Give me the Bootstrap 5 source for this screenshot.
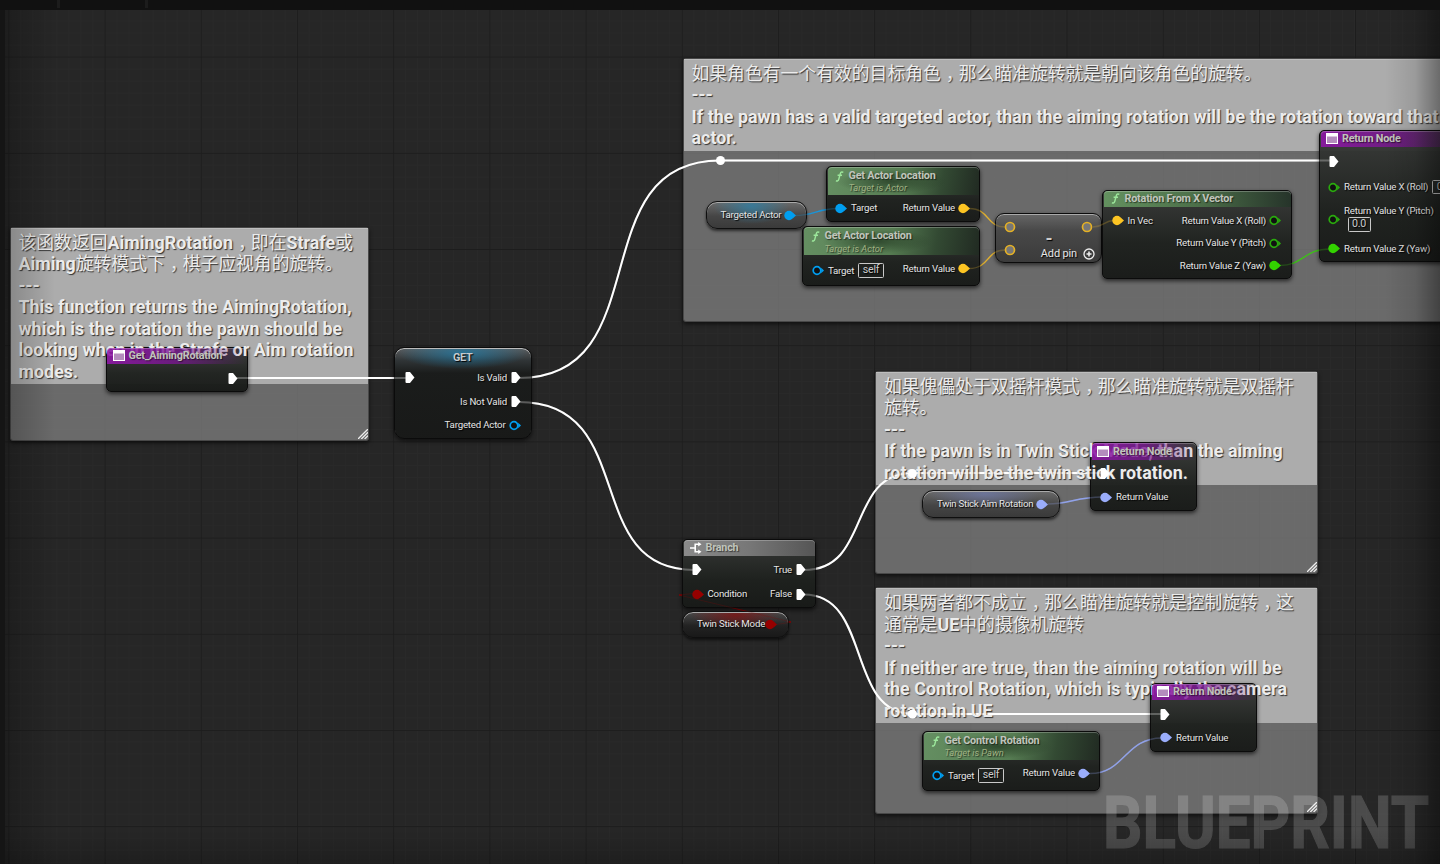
<!DOCTYPE html>
<html lang="zh-CN">
<head>
<meta charset="utf-8">
<meta name="viewport" content="width=device-width, initial-scale=1">
<title>AimingRotation – Blueprint</title>
<link href="https://cdn.jsdelivr.net/npm/bootstrap@5.3.0/dist/css/bootstrap.min.css" rel="stylesheet">
<style>
body{background:#262626;font-family:Roboto,"Noto Sans CJK SC",sans-serif;font-size:9.7px;line-height:1;color:#e6e6e6;overflow:hidden}
.graph{width:1440px;height:864px;white-space:nowrap;background-color:#262626;
 background-image:
 linear-gradient(90deg,#1d1d1d 1.3px,transparent 1.3px),
 linear-gradient(#1d1d1d 1.3px,transparent 1.3px),
 linear-gradient(90deg,#292929 1px,transparent 1px),
 linear-gradient(#292929 1px,transparent 1px);
 background-size:96.2px 96.2px,96.2px 96.2px,12.025px 12.025px,12.025px 12.025px;
 background-position:8.4px 56.6px,8.4px 56.6px,8.4px 56.6px,8.4px 56.6px}
.vignette{inset:0;z-index:8;pointer-events:none;
 background:linear-gradient(90deg,rgba(0,0,0,.25),transparent 55px,transparent 1385px,rgba(0,0,0,.1) 1415px,rgba(0,0,0,.38)),
 linear-gradient(transparent 830px,rgba(0,0,0,.2))}
.topstrip{left:0;top:0;width:1440px;height:10px;background:#111;z-index:9;padding-left:57px;gap:85px}
.topstrip i{width:3px;height:8px;background:#1c1c1c}
.leftstrip{left:0;top:0;width:5px;height:864px;background:#151515;z-index:9}
svg.wires{left:0;top:0;width:1440px;height:864px;fill:none;pointer-events:none}
svg.over{z-index:4;opacity:.25}
svg.knots{z-index:3}
/* comments */
.note{background:rgba(131,131,131,.73);border:1.5px solid #484848;border-radius:3px;box-shadow:0 2px 4px rgba(0,0,0,.6)}
.note .bar{background:#acacac;box-shadow:inset 0 1px 0 #bdbdbd}
.note .txt{position:relative;z-index:2;padding:4px 0 0 8px;font-size:17.8px;font-weight:700;line-height:21.6px;letter-spacing:.06px;color:#ececec;text-shadow:1px 1px 1px #333}
.note .zh{font-weight:400;letter-spacing:.03px}
.zh b{letter-spacing:.06px}
.cm{padding-left:5px;margin-right:-5px}
.grip{right:0;bottom:1px;width:10px;height:10px;fill:none;stroke:#eee;stroke-width:1.3}
/* nodes */
.bp{z-index:auto;transform:none;margin-left:-.5px}
.shell{inset:0;z-index:1;border-radius:5px;border:1px solid #0b0b0b;background:linear-gradient(rgba(56,58,56,.96),rgba(30,33,30,.97) 60%,rgba(24,26,24,.97));box-shadow:0 2px 4px rgba(0,0,0,.65)}
.hd{position:relative;z-index:3;margin:1px 1.5px 0;border-radius:4px 4px 0 0;padding-left:7px;font-size:10.8px;font-weight:700;letter-spacing:-.2px;color:#c0c5bc;text-shadow:1px 1px 1px #0008;box-shadow:inset 0 1px 0 rgba(255,255,255,.25)}
.hd.align-items-center span{padding-top:1.5px}
.purple{height:16.5px;background:linear-gradient(90deg,rgba(142,24,166,.9),rgba(122,22,146,.78) 50%,rgba(95,30,112,.3) 85%,transparent)}
.green1{height:16.5px;background:linear-gradient(90deg,#63915f,#4c6f49 50%,#26342a)}
.green2{height:28px;background:radial-gradient(ellipse 55px 12px at 42% 52%,rgba(36,58,35,.75),transparent),linear-gradient(100deg,#658f62,#567c52 50%,#334a33 75%,#212a22)}
.grayh{height:16.5px;background:linear-gradient(90deg,#8a8a8a,#777 50%,#555)}
.sub{font-size:9.4px;font-style:italic;font-weight:400;letter-spacing:-.04px;color:#a0b283;margin-top:2px}
.rw{position:relative;z-index:3;text-shadow:1px 1px 1px #000;letter-spacing:-.2px}
.ex{width:10px;height:11px;fill:#fff}
.pn{width:13px;height:11px}
.blue{color:#009ef0}.gold{color:#fdc523}.lime{color:#33d300}.dlime{color:#2aa90e}.peri{color:#9aadfb}.red{color:#960000}
.val{border:1px solid #c9c9c9;border-radius:1.5px;height:14.5px;padding:0 3.5px;font-size:10.6px;letter-spacing:-.2px;color:#ccc}
.pill{z-index:3;border-radius:11px;border:1.5px solid #0f0f0f;box-shadow:inset 0 1px 0 #aaa,0 2px 3px rgba(0,0,0,.6);letter-spacing:-.2px;text-shadow:1px 1px 1px #000}
.watermark{left:1100px;top:780px;width:340px;height:84px;z-index:6}
</style>
</head>
<body>
<svg class="d-none">
 <symbol id="ex" viewBox="0 0 10 11"><path d="M.5 1Q.5 0 1.500 0H5L9.500 5.500L5 11H1.500Q.5 11 .5 10Z"/></symbol>
 <symbol id="pf" viewBox="0 0 13 11"><circle cx="5" cy="5.5" r="4.7" fill="currentColor"/><path d="M8.6 2.500L12 5.500L8.600 8.500Z" fill="currentColor"/></symbol>
 <symbol id="po" viewBox="0 0 13 11"><circle cx="5" cy="5.5" r="3.8" fill="#111" stroke="currentColor" stroke-width="1.7"/><path d="M9.2 2.800L12 5.500L9.200 8.200Z" fill="currentColor"/></symbol>
 <symbol id="ring" viewBox="0 0 12 12"><circle cx="6" cy="6" r="4.5" fill="#777" stroke="#e5b125" stroke-width="1.7"/></symbol>
 <symbol id="win" viewBox="0 0 12 11"><path d="M0 0H12V11H0Z" fill="#fff"/><path d="M1 3.5H11V10H1Z" fill="#b48dbd"/></symbol>
 <symbol id="fn" viewBox="0 0 9 11"><path d="M8.3 1.3C6.6.4 5.7 1.2 5.2 3L3.8 8.2C3.3 10 2.2 10.4 1 9.6M2.6 4.3H7" fill="none" stroke="#9ce79b" stroke-width="1.4"/></symbol>
 <symbol id="br" viewBox="0 0 12 12"><path d="M0 6H4.5M9 2.2H5.2V9.8H9" fill="none" stroke="#fff" stroke-width="1.6"/><path d="M8.2 0L11.5 2.2L8.2 4.5ZM8.2 7.6L11.5 9.8L8.2 12Z" fill="#fff"/></symbol>
 <symbol id="grip" viewBox="0 0 10 10"><path d="M0 10L10 0M3.3 10L10 3.3M6.6 10L10 6.6"/></symbol>
</svg>
<main class="graph position-relative overflow-hidden">

 <section class="note position-absolute" style="left:9.500px;top:226.500px;width:359px;height:214px">
  <div class="bar" style="height:156px"><div class="txt">
   <div class="zh">该函数返回<b>AimingRotation</b><span class="cm">，</span>即在<b>Strafe</b>或</div>
   <div class="zh"><b>Aiming</b>旋转模式下<span class="cm">，</span>棋子应视角的旋转。</div>
   <div>---</div><div>This function returns the AimingRotation,</div><div>which is the rotation the pawn should be</div><div>looking when in the Strafe or Aim rotation</div><div>modes.</div>
  </div></div>
  <svg class="grip position-absolute"><use href="#grip"/></svg>
 </section>
 <section class="note position-absolute" style="left:682.500px;top:57.500px;width:800px;height:264px">
  <div class="bar" style="height:92.5px"><div class="txt">
   <div class="zh">如果角色有一个有效的目标角色<span class="cm">，</span>那么瞄准旋转就是朝向该角色的旋转。</div>
   <div>---</div><div>If the pawn has a valid targeted actor, than the aiming rotation will be the rotation toward that</div><div>actor.</div>
  </div></div>
 </section>
 <section class="note position-absolute" style="left:875px;top:370.500px;width:443px;height:203px">
  <div class="bar" style="height:113px"><div class="txt">
   <div class="zh">如果傀儡处于双摇杆模式<span class="cm">，</span>那么瞄准旋转就是双摇杆</div>
   <div class="zh">旋转。</div>
   <div>---</div><div>If the pawn is in Twin Stick Mode, than the aiming</div><div>rotation will be the twin stick rotation.</div>
  </div></div>
  <svg class="grip position-absolute"><use href="#grip"/></svg>
 </section>
 <section class="note position-absolute" style="left:875px;top:587px;width:443px;height:227px">
  <div class="bar" style="height:135px"><div class="txt">
   <div class="zh">如果两者都不成立<span class="cm">，</span>那么瞄准旋转就是控制旋转<span class="cm">，</span>这</div>
   <div class="zh">通常是<b>UE</b>中的摄像机旋转</div>
   <div>---</div><div>If neither are true, than the aiming rotation will be</div><div>the Control Rotation, which is typically the camera</div><div>rotation in UE</div>
  </div></div>
  <svg class="grip position-absolute"><use href="#grip"/></svg>
 </section>

 <svg class="wires position-absolute">
  <g id="w">
   <g stroke="#fff" stroke-width="2">
    <path d="M236 378H408"/>
    <path d="M519 378C660 378 580 160.500 720 160.500H1331"/>
    <path d="M519 402C640 402 580 570 694 570"/>
    <path d="M804 570C872 570 846 473 913 473H1104"/>
    <path d="M804 594.500C872 594.500 846 714 913 714H1163"/>
   </g>
   <g stroke-width="1.4">
    <path stroke="#1b94d6" d="M795 215.500C815 215.500 817 208.500 838 208.500"/>
    <path stroke="#e0b030" d="M969 208.500C990 208.500 986 227 1005 227M969 268.500C990 268.500 986 250 1005 250M1093 227C1104 227 1104 220.500 1114 220.500"/>
    <path stroke="#3fbd1b" d="M1280 265.500C1303 265.500 1304 249 1330 249"/>
    <path stroke="#91a2e8" d="M1048 504C1068 504 1078 497 1102 497M1090 773.500C1125 773.500 1125 738 1162 738"/>
    <path stroke="#840707" stroke-width="1" d="M777 624.500L791 622L679 595L693 593.500"/>
   </g>
  </g>
 </svg>
 <svg class="wires knots position-absolute"><g fill="#fff"><circle cx="720.500" cy="160.500" r="4.500"/><circle cx="912.500" cy="473.500" r="4.500"/><circle cx="912.500" cy="714" r="4.500"/></g></svg>

 <!-- entry -->
 <article class="bp position-absolute" style="left:106px;top:346.500px;width:142px;height:45px">
  <div class="shell position-absolute"></div>
  <div class="hd purple d-flex align-items-center gap-1" style="padding-left:5.500px"><svg width="12" height="11"><use href="#win"/></svg><span>Get_AimingRotation</span></div>
  <div class="rw d-flex align-items-center justify-content-end" style="height:28px;padding-right:10px"><svg class="ex"><use href="#ex"/></svg></div>
 </article>

 <!-- validated get -->
 <article class="bp position-absolute" style="left:394.500px;top:346.500px;width:137.500px;height:92px">
  <div class="shell position-absolute" style="border-radius:10px;background:radial-gradient(ellipse 65px 16px at 50% 5px,rgba(28,128,175,.7),transparent),linear-gradient(rgba(95,98,100,.95),rgba(48,53,55,.95) 14%,rgba(26,28,27,.96) 28%,rgba(24,25,24,.96));box-shadow:inset 0 1px 0 #bbb,0 2px 4px rgba(0,0,0,.6)"></div>
  <div class="rw d-flex align-items-center justify-content-center fw-bold" style="height:19.500px;padding-top:4px;font-size:10.800px;color:#c4ccd0">GET</div>
  <div class="rw d-flex align-items-center" style="height:23.700px;padding:0 10.500px"><svg class="ex"><use href="#ex"/></svg><span class="ms-auto me-1">Is Valid</span><svg class="ex"><use href="#ex"/></svg></div>
  <div class="rw d-flex align-items-center" style="height:23.700px;padding:0 10.500px"><span class="ms-auto me-1">Is Not Valid</span><svg class="ex"><use href="#ex"/></svg></div>
  <div class="rw d-flex align-items-center" style="height:23.700px;padding:0 10px"><span class="ms-auto" style="margin-right:3px">Targeted Actor</span><svg class="pn blue"><use href="#po"/></svg></div>
 </article>

 <!-- branch -->
 <article class="bp position-absolute" style="left:682.500px;top:538.500px;width:134px;height:69.500px">
  <div class="shell position-absolute"></div>
  <div class="hd grayh d-flex align-items-center gap-1" style="padding-left:6px"><svg width="12" height="12"><use href="#br"/></svg><span>Branch</span></div>
  <div class="rw d-flex align-items-center" style="height:27.500px;padding:0 10px"><svg class="ex"><use href="#ex"/></svg><span class="ms-auto me-1">True</span><svg class="ex"><use href="#ex"/></svg></div>
  <div class="rw d-flex align-items-center" style="height:21px;padding:0 10px"><svg class="pn red"><use href="#pf"/></svg><span style="margin-left:2.500px">Condition</span><span class="ms-auto me-1">False</span><svg class="ex"><use href="#ex"/></svg></div>
 </article>

 <!-- variable pills -->
 <div class="pill position-absolute d-flex align-items-center" style="left:682px;top:610.500px;width:107px;height:27px;padding-left:14px;background:radial-gradient(ellipse 45px 14px at 50% 3px,rgba(130,15,15,.75),transparent),linear-gradient(#4b4b4b,#222 55%,#191919)"><span>Twin Stick Mode</span><svg class="pn red"><use href="#pf"/></svg></div>
 <div class="pill position-absolute d-flex align-items-center" style="left:706px;top:201px;width:101px;height:28px;padding-left:13.500px;background:radial-gradient(ellipse 38px 18px at 45% 4px,rgba(50,125,160,.85),transparent),linear-gradient(#6b6b6b,#454545 55%,#3a3a3a)"><span>Targeted Actor</span><svg class="pn blue" style="margin-left:2.500px"><use href="#pf"/></svg></div>
 <div class="pill position-absolute d-flex align-items-center" style="left:922px;top:490px;width:138px;height:28px;padding-left:14px;background:radial-gradient(ellipse 55px 14px at 45% 3px,rgba(110,120,165,.8),transparent),linear-gradient(#6b6b6b,#454545 55%,#3a3a3a);letter-spacing:-.27px"><span>Twin Stick Aim Rotation</span><svg class="pn peri" style="margin-left:3px"><use href="#pf"/></svg></div>

 <!-- get actor location, wired target -->
 <article class="bp position-absolute" style="left:826.500px;top:165.500px;width:154px;height:56px">
  <div class="shell position-absolute"></div>
  <div class="hd green2 d-flex"><svg width="9" height="11" style="margin-top:4px"><use href="#fn"/></svg><div style="margin:4px 0 0 5px">Get Actor Location<div class="sub">Target is Actor</div></div></div>
  <div class="rw d-flex align-items-center" style="height:27px;padding:0 9px"><svg class="pn blue"><use href="#pf"/></svg><span style="margin-left:3px">Target</span><span class="ms-auto" style="margin-right:3px">Return Value</span><svg class="pn gold"><use href="#pf"/></svg></div>
 </article>
 <!-- get actor location, self -->
 <article class="bp position-absolute" style="left:802.500px;top:226px;width:178px;height:60px">
  <div class="shell position-absolute"></div>
  <div class="hd green2 d-flex"><svg width="9" height="11" style="margin-top:4px"><use href="#fn"/></svg><div style="margin:4px 0 0 5px">Get Actor Location<div class="sub">Target is Actor</div></div></div>
  <div class="rw d-flex align-items-center" style="height:27px;padding:0 9px"><div class="d-flex align-items-center" style="padding-top:4px"><svg class="pn blue" style="margin-left:1px"><use href="#po"/></svg><span style="margin:0 4px 0 3px">Target</span><span class="val d-flex align-items-center">self</span></div><span class="ms-auto" style="margin-right:3px">Return Value</span><svg class="pn gold"><use href="#pf"/></svg></div>
 </article>
 <!-- subtract -->
 <article class="bp position-absolute" style="left:995.500px;top:213px;width:107px;height:50px">
  <div class="shell position-absolute" style="border-radius:9px;background:linear-gradient(#666,#484848 35%,#3b3b3b);box-shadow:inset 0 1px 0 #aaa,0 2px 4px rgba(0,0,0,.6)"></div>
  <div class="rw d-flex justify-content-between" style="height:50px;padding:8px 9px 0">
   <div class="d-flex flex-column" style="gap:11px"><svg width="12" height="12"><use href="#ring"/></svg><svg width="12" height="12"><use href="#ring"/></svg></div>
   <div class="d-flex flex-column align-items-end"><svg width="12" height="12"><use href="#ring"/></svg>
    <b style="font-size:18px;line-height:10px;margin:1px 40.500px 0 0;color:#ccc">-</b>
    <div class="d-flex align-items-center" style="font-size:11px;margin:3.500px -2px 0 0;letter-spacing:-.15px"><span style="margin-right:6px">Add pin</span><svg width="12" height="12" fill="none" stroke="#eee"><circle cx="6" cy="6" r="5" stroke-width="1.300"/><path d="M3.500 6H8.500M6 3.500V8.500" stroke-width="1.600"/></svg></div></div>
  </div>
 </article>
 <!-- rotation from x vector -->
 <article class="bp position-absolute" style="left:1102.500px;top:189.500px;width:190px;height:89px">
  <div class="shell position-absolute"></div>
  <div class="hd green1 d-flex align-items-center"><svg width="9" height="11"><use href="#fn"/></svg><span style="margin-left:5px">Rotation From X Vector</span></div>
  <div class="rw d-flex align-items-center" style="height:27px;padding:0 10px"><svg class="pn gold"><use href="#pf"/></svg><span style="margin-left:2.500px">In Vec</span><span class="ms-auto" style="margin-right:3px">Return Value X (Roll)</span><svg class="pn dlime"><use href="#po"/></svg></div>
  <div class="rw d-flex align-items-center justify-content-end" style="height:18px;padding:0 10px"><span style="margin-right:3px">Return Value Y (Pitch)</span><svg class="pn dlime"><use href="#po"/></svg></div>
  <div class="rw d-flex align-items-center justify-content-end" style="height:27px;padding:0 10px"><span style="margin-right:3px">Return Value Z (Yaw)</span><svg class="pn lime"><use href="#pf"/></svg></div>
 </article>
 <!-- return: rotator split -->
 <article class="bp position-absolute" style="left:1319.500px;top:129.500px;width:160px;height:132px">
  <div class="shell position-absolute"></div>
  <div class="hd purple d-flex align-items-center gap-1" style="padding-left:5.500px"><svg width="12" height="11"><use href="#win"/></svg><span>Return Node</span></div>
  <div class="rw d-flex align-items-center" style="height:28px;padding-left:9.500px"><svg class="ex"><use href="#ex"/></svg></div>
  <div class="rw d-flex align-items-center" style="height:24px;padding-left:9px"><svg class="pn dlime"><use href="#po"/></svg><span style="margin:0 4px 0 3px">Return Value X (Roll)</span><span class="val d-flex align-items-center">0.0</span></div>
  <div class="rw d-flex align-items-center" style="height:40px;padding-left:9px"><svg class="pn dlime"><use href="#po"/></svg><div style="margin-left:3px">Return Value Y (Pitch)<div class="d-flex" style="padding-top:1px"><span class="val d-flex align-items-center" style="margin-left:3.500px">0.0</span></div></div></div>
  <div class="rw d-flex align-items-center" style="height:19px;padding-left:9px"><svg class="pn lime"><use href="#pf"/></svg><span style="margin-left:3px">Return Value Z (Yaw)</span></div>
 </article>
 <!-- return: twin stick -->
 <article class="bp position-absolute" style="left:1090.500px;top:442px;width:107px;height:69px">
  <div class="shell position-absolute"></div>
  <div class="hd purple d-flex align-items-center gap-1" style="padding-left:5.500px"><svg width="12" height="11"><use href="#win"/></svg><span>Return Node</span></div>
  <div class="rw d-flex align-items-center" style="height:27px;padding-left:9.500px"><svg class="ex"><use href="#ex"/></svg></div>
  <div class="rw d-flex align-items-center" style="height:21px;padding-left:10px"><svg class="pn peri"><use href="#pf"/></svg><span style="margin-left:3px">Return Value</span></div>
 </article>
 <!-- return: control rotation -->
 <article class="bp position-absolute" style="left:1150.500px;top:682.500px;width:107px;height:69px">
  <div class="shell position-absolute"></div>
  <div class="hd purple d-flex align-items-center gap-1" style="padding-left:5.500px"><svg width="12" height="11"><use href="#win"/></svg><span>Return Node</span></div>
  <div class="rw d-flex align-items-center" style="height:28px;padding-left:9.500px"><svg class="ex"><use href="#ex"/></svg></div>
  <div class="rw d-flex align-items-center" style="height:19px;padding-left:10px"><svg class="pn peri"><use href="#pf"/></svg><span style="margin-left:3px">Return Value</span></div>
 </article>
 <!-- get control rotation -->
 <article class="bp position-absolute" style="left:922.500px;top:730.500px;width:178px;height:60px">
  <div class="shell position-absolute"></div>
  <div class="hd green2 d-flex"><svg width="9" height="11" style="margin-top:4px"><use href="#fn"/></svg><div style="margin:4px 0 0 5px">Get Control Rotation<div class="sub">Target is Pawn</div></div></div>
  <div class="rw d-flex align-items-center" style="height:27px;padding:0 9px"><div class="d-flex align-items-center" style="padding-top:5px"><svg class="pn blue" style="margin-left:1px"><use href="#po"/></svg><span style="margin:0 4px 0 3px">Target</span><span class="val d-flex align-items-center">self</span></div><span class="ms-auto" style="margin-right:3px">Return Value</span><svg class="pn peri"><use href="#pf"/></svg></div>
 </article>

 <svg class="wires over position-absolute"><use href="#w"/></svg>
 <svg class="watermark position-absolute"><text x="3" y="68" font-family="Roboto" font-weight="700" font-size="73" fill="#fff" stroke="#fff" stroke-width="1.200" opacity=".17" textLength="326" lengthAdjust="spacingAndGlyphs">BLUEPRINT</text></svg>
 <div class="vignette position-absolute"></div>
 <div class="leftstrip position-absolute"></div>
 <div class="topstrip position-absolute d-flex"><i></i><i></i></div>
</main>
<script src="https://cdn.jsdelivr.net/npm/bootstrap@5.3.0/dist/js/bootstrap.bundle.min.js"></script>
</body>
</html>
